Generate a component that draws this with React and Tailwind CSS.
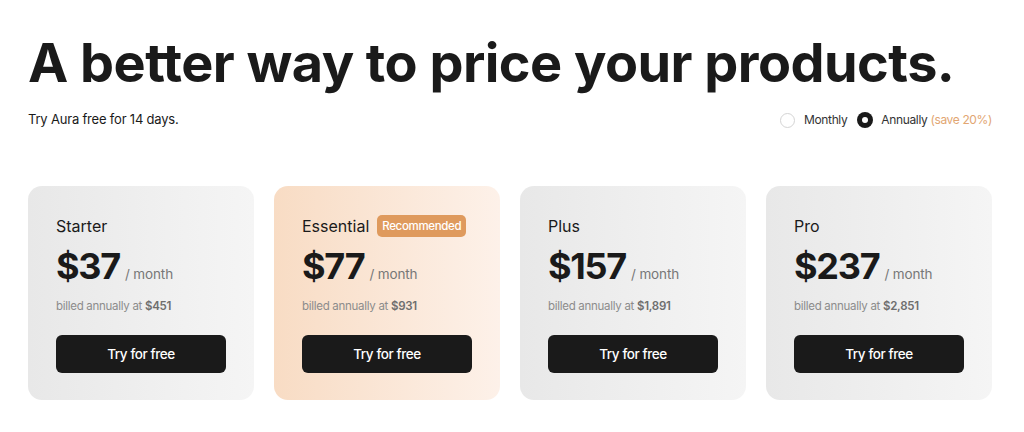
import React from "react";

const plans = [
  { name: "Starter", price: "$37", billed: "$451" },
  { name: "Essential", price: "$77", billed: "$931", recommended: true },
  { name: "Plus", price: "$157", billed: "$1,891" },
  { name: "Pro", price: "$237", billed: "$2,851" },
];

function Card({ plan }) {
  const bg = plan.recommended
    ? "bg-linear-to-r from-[#f8dcc4] to-[#fdf1e9]"
    : "bg-linear-to-r from-[#e8e8e8] to-[#f5f5f5]";
  return (
    <div className={`${bg} rounded-[14px] px-[28px] pt-[28px] pb-[27px] flex flex-col`}>
      <div className="flex items-center h-[24px]">
        <span className="text-[16px] leading-[24px] text-[#1a1a1a]">{plan.name}</span>
        {plan.recommended && (
          <span className="ml-[8px] h-[22px] px-[5px] rounded-[5px] bg-[#df9a5d] text-white text-[11.5px] leading-[22px] font-medium tracking-[-0.03em]">
            Recommended
          </span>
        )}
      </div>
      <div className="flex items-baseline mt-[10px]">
        <span className="text-[36px] leading-[36px] font-bold tracking-[-0.035em] text-[#1a1a1a]">
          {plan.price}
        </span>
        <span className="ml-[5px] text-[13.5px] text-[#777] tracking-[-0.01em]">/ month</span>
      </div>
      <div className="mt-[14px] text-[11.5px] leading-[16px] text-[#8c8c8c] tracking-[-0.025em]">
        billed annually at <span className="font-semibold text-[#6e6e6e]">{plan.billed}</span>
      </div>
      <button className="mt-[21px] h-[38px] w-full rounded-[6px] bg-[#1a1a1a] text-white text-[13.5px] font-medium tracking-[-0.03em]">
        Try for free
      </button>
    </div>
  );
}

export default function App() {
  return (
    <div
      className="w-[1024px] h-[432px] bg-white pl-[28px] pr-[32px] pt-[35px] text-[#1a1a1a]"
      style={{ fontFamily: "Inter, 'Noto Sans', sans-serif" }}
    >
      <h1 className="text-[54px] leading-[56px] font-bold tracking-[-0.01em] text-[#1a1a1a] whitespace-nowrap">
        A better way to price your products.
      </h1>
      <div className="mt-[18px] flex items-center justify-between h-[22px]">
        <span className="text-[13px] text-[#1a1a1a] tracking-[-0.015em]">Try Aura free for 14 days.</span>
        <div className="flex items-center text-[12px] tracking-[-0.03em]">
          <span className="w-[15px] h-[15px] rounded-full border border-[#d4d4d4] bg-white" />
          <span className="ml-[9px] text-[#333]">Monthly</span>
          <span className="ml-[10px] w-[16px] h-[16px] rounded-full bg-[#1a1a1a] flex items-center justify-center">
            <span className="w-[6px] h-[6px] rounded-full bg-white" />
          </span>
          <span className="ml-[8px] text-[#333]">Annually</span>
          <span className="ml-[3px] text-[#e2a672]">(save 20%)</span>
        </div>
      </div>
      <div className="mt-[55px] grid grid-cols-4 gap-[20px]">
        {plans.map((p) => (
          <Card key={p.name} plan={p} />
        ))}
      </div>
    </div>
  );
}
